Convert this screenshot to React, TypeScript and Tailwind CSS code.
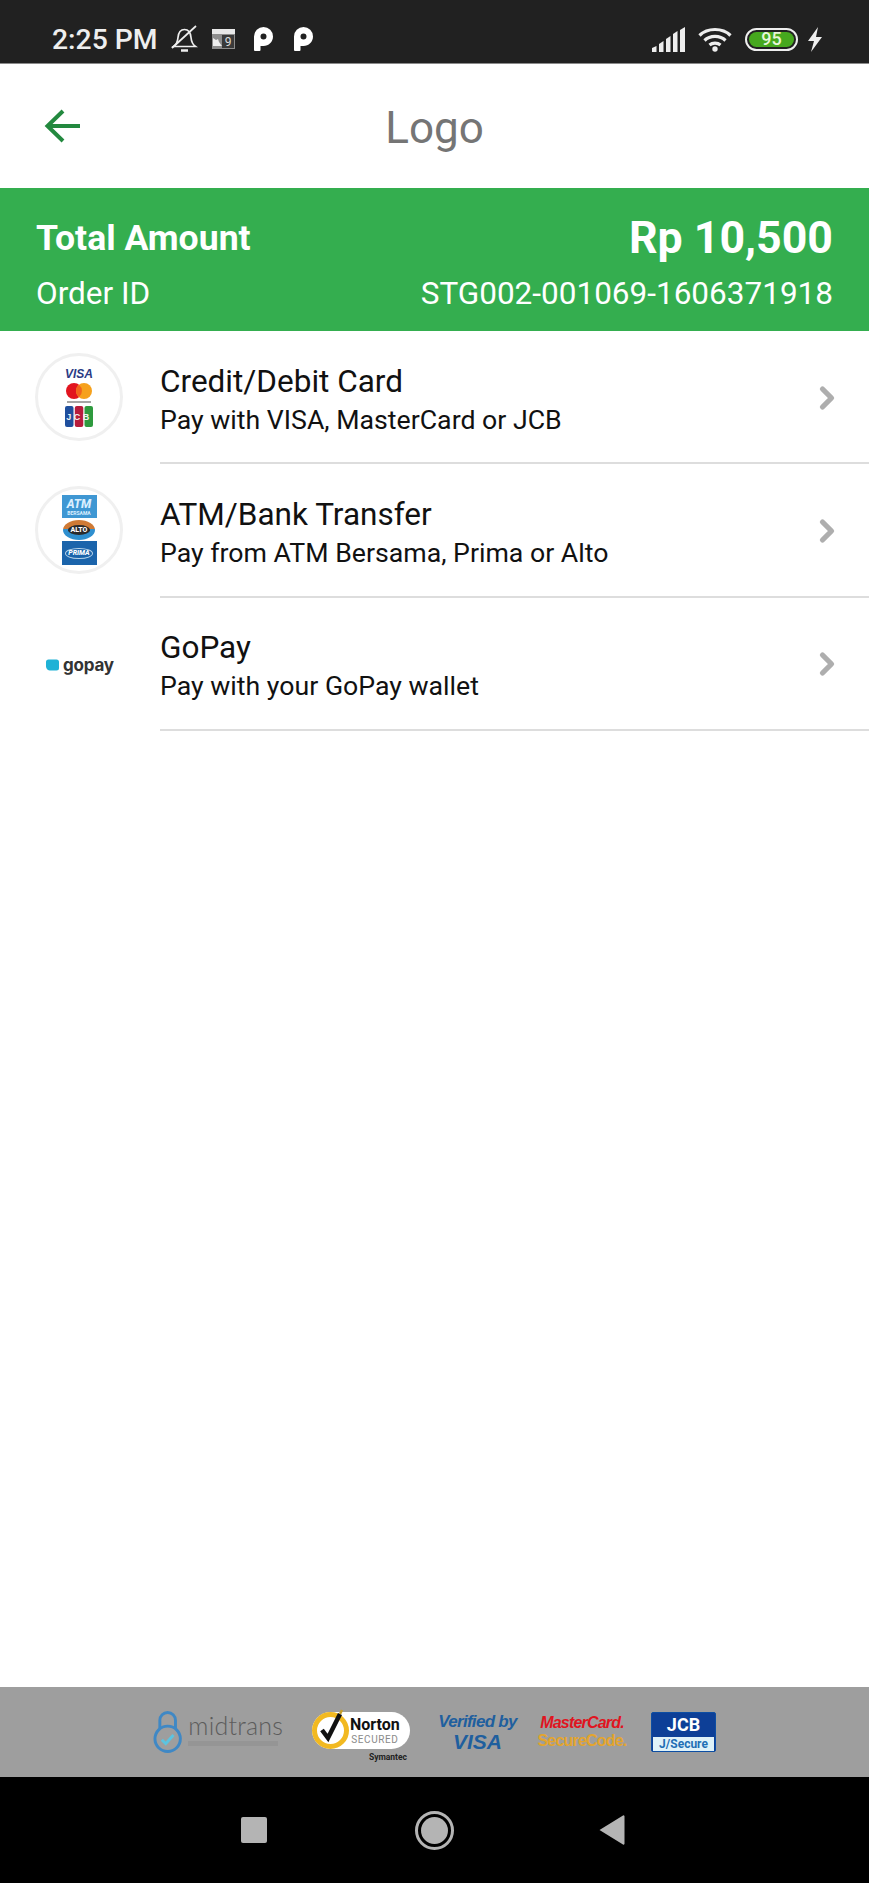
import { ChevronRight } from 'lucide-react';

const methods = [
  { title: 'Credit/Debit Card', sub: 'Pay with VISA, MasterCard or JCB', logo: 'card' },
  { title: 'ATM/Bank Transfer', sub: 'Pay from ATM Bersama, Prima or Alto', logo: 'atm' },
  { title: 'GoPay', sub: 'Pay with your GoPay wallet', logo: 'gopay' },
];

function CardLogo() {
  return (
    <div className="flex h-[88px] w-[88px] flex-col items-center justify-center rounded-full border-[3px] border-[#f0f0f0] bg-white">
      <span className="font-['Liberation_Sans',sans-serif] text-[12px] leading-[13px] font-bold italic text-[#2a3b84]">VISA</span>
      <svg width="28" height="21" viewBox="0 0 28 21" className="mt-[2px]">
        <circle cx="9" cy="8" r="8" fill="#e2141f" />
        <circle cx="19" cy="8" r="8" fill="#f6a11c" />
        <path d="M14 1.800a8 8 0 0 1 0 12.400a8 8 0 0 1 0-12.400z" fill="#f2641d" />
        <rect x="2" y="18" width="24" height="2" fill="#a5a5a5" />
      </svg>
      <svg width="28" height="21" viewBox="0 0 28 21" className="mt-[2px]">
        <rect x="0" y="0" width="8.500" height="21" rx="2" fill="#1f4f9e" />
        <rect x="9.800" y="0" width="8.500" height="21" rx="2" fill="#b71c3c" />
        <rect x="19.500" y="0" width="8.500" height="21" rx="2" fill="#2e9a3e" />
        <text x="14" y="14" textAnchor="middle" fontSize="9" fontWeight="700" fill="#f2f2f2" letterSpacing="2.500" fontFamily="Liberation Sans">JCB</text>
      </svg>
    </div>
  );
}

function AtmLogo() {
  return (
    <div className="flex h-[88px] w-[88px] flex-col items-center justify-center rounded-full border-[3px] border-[#f0f0f0] bg-white">
      <div className="flex h-[23px] w-[35px] flex-col items-center justify-center bg-[#3f97d3] text-[#dcefff]">
        <span className="text-[12px] leading-[12px] font-extrabold italic">ATM</span>
        <span className="text-[5px] leading-[6px] font-bold">BERSAMA</span>
      </div>
      <div className="mt-[2px] flex h-[20px] w-[32px] items-center justify-center rounded-[50%] bg-[linear-gradient(#cf7a35_45%,#2f8fcf_45%)]">
        <span className="rounded-[50%] bg-[#2b2b2b] px-[3px] text-[7px] leading-[10px] font-extrabold text-white">ALTO</span>
      </div>
      <div className="mt-[1px] flex h-[24px] w-[35px] items-center justify-center bg-[#1b64ab]">
        <span className="rounded-[50%] border border-[#b8d4ea] px-[2px] text-[7px] leading-[9px] font-extrabold italic text-white">PRIMA</span>
      </div>
    </div>
  );
}

function GopayLogo() {
  return (
    <div className="flex items-center gap-[4px] pt-[3px] pl-[11px]">
      <svg width="13" height="12" viewBox="0 0 13 12">
        <path d="M2.500 0.500h8a2.500 2.500 0 0 1 2.500 2.500v6a2.500 2.500 0 0 1-2.500 2.500h-6a4 4 0 0 1-4.500-4V3a2.500 2.500 0 0 1 2.500-2.500z" fill="#1fb2d6" />
      </svg>
      <span className="font-['Inter',sans-serif] text-[17px] leading-none font-bold tracking-[-0.2px] text-[#333333]">gopay</span>
    </div>
  );
}

function PIcon() {
  return (
    <svg width="19" height="24" viewBox="0 0 19 24">
      <path fillRule="evenodd" d="M0 9.500a9.500 9.500 0 0 1 19 0c0 5.500-4.500 9.500-9.500 9.500H6.500v4a1 1 0 0 1-1 1H1a1 1 0 0 1-1-1zM9.500 6.500a3 3 0 1 0 0 6a3 3 0 0 0 0-6z" fill="#fff" />
    </svg>
  );
}

function StatusBar() {
  return (
    <div className="flex h-[64px] items-center justify-between border-b border-[#8a8a8a] bg-[#212121] pt-[15px] pl-[52px] pr-[46px]">
      <div className="flex items-center">
        <span className="mt-[3px] text-[28.300px] leading-none font-medium text-[#eeeeee]">2:25 PM</span>
        <svg width="27" height="27" viewBox="0 0 27 27" fill="none" stroke="#eee" strokeWidth="1.700" className="ml-[13px]">
          <path d="M2.500 21.500c3-2 4-4 4.500-9C7.500 7 10 4.500 13.500 4.500s6 2.500 6.500 8c.5 5 1.500 7 4.500 9z" />
          <path d="M10 25.500h7" strokeWidth="2.500" />
          <path d="M1 23L25 1" />
        </svg>
        <svg width="23" height="21" viewBox="0 0 23 21" className="ml-[14px]">
          <rect x="0" y="1" width="23" height="20" fill="#8d8d8d" />
          <rect x="0" y="1" width="23" height="5" fill="#e8e8e8" />
          <rect x="10" y="7" width="12" height="13" fill="#3a3a3a" />
          <path d="M1 10l3 2 2-1 1 3 3 4H1z" fill="#eee" />
          <text x="16" y="18" textAnchor="middle" fontSize="12" fill="#ddd" fontFamily="Roboto">9</text>
        </svg>
        <div className="mt-[1px] ml-[19px] flex gap-[21px]">
          <PIcon />
          <PIcon />
        </div>
      </div>
      <div className="flex items-center">
        <svg width="33" height="25" viewBox="0 0 33 25" fill="#eee">
          <path d="M0 21l4.500-2v6H0z" />
          <path d="M7 17l4.500-3v11H7z" />
          <path d="M14 12l4.500-3v16H14z" />
          <path d="M21 7l4.500-3v21H21z" />
          <path d="M28 3l5-3v25h-5z" />
        </svg>
        <svg width="34" height="25" viewBox="0 0 34 25" fill="none" stroke="#eee" strokeWidth="3.200" className="ml-[13px]">
          <path d="M1.500 8.500C9.500 0.500 24.500 0.500 32.500 8.500" />
          <path d="M6.500 13.500C12 8 22 8 27.500 13.500" />
          <path d="M11.500 18C14.500 15.500 19.500 15.500 22.500 18" />
          <circle cx="17" cy="22" r="2.700" fill="#eee" stroke="none" />
        </svg>
        <div className="ml-[13px] flex h-[23px] w-[53px] items-center justify-center rounded-full border-[2.500px] border-[#eeeeee] p-[2px]">
          <div className="flex h-full w-full items-center justify-center rounded-full bg-[#46a81e] text-[18px] leading-none font-medium text-[#e8f5d8]">95</div>
        </div>
        <svg width="16" height="25" viewBox="0 0 16 25" fill="#eee" className="ml-[9px]">
          <path d="M11 0L1 14h6l-3 11L15 10H9z" />
        </svg>
      </div>
    </div>
  );
}

function FooterLogos() {
  return (
    <div className="flex h-[90px] items-center bg-[#9e9e9e] pl-[153px]">
      <div className="flex w-[130px] items-start">
        <svg width="30" height="45" viewBox="0 0 30 45" fill="none" stroke="#3f88c5" strokeWidth="3">
          <path d="M7 19V10a8 8 0 0 1 16 0v9" />
          <circle cx="15" cy="29" r="13" />
          <path d="M9 30l4 4 8-9" stroke="#5cc4e0" />
        </svg>
        <div className="mt-[2px] ml-[6px] flex flex-col">
          <span className="font-['Lato',sans-serif] text-[25px] leading-[26px] font-light tracking-[0.2px] text-[#5c5c5c]">midtrans</span>
          <span className="mt-[3px] h-[5px] w-[90px] bg-[#959595]" />
        </div>
      </div>
      <div className="ml-[29px] flex h-[62px] w-[98px] flex-col pt-[11px]">
        <div className="flex h-[37px] shrink-0 items-center rounded-full bg-white">
          <div className="flex h-[37px] w-[37px] shrink-0 items-center justify-center rounded-full border-[5px] border-[#f2b921] bg-white">
            <svg width="24" height="34" viewBox="0 0 24 34" fill="none" className="-mt-[10px]">
              <path d="M3 21l6 8L21 5" stroke="#111" strokeWidth="4.500" />
              <path d="M21 5l2-4" stroke="#c9a02a" strokeWidth="2.500" />
            </svg>
          </div>
          <div className="ml-[1px] flex flex-col items-center">
            <span className="text-[16px] leading-[18px] font-bold text-[#111]">Norton</span>
            <span className="text-[10px] leading-[12px] tracking-[0.6px] text-[#8a8a8a]">SECURED</span>
          </div>
        </div>
        <span className="mt-[3px] pr-[3px] text-right text-[8.500px] leading-[10px] font-bold text-[#222]">Symantec</span>
      </div>
      <div className="ml-[28px] flex w-[79px] flex-col items-center font-['Liberation_Sans',sans-serif] text-[#1f5f9e]">
        <span className="text-[17px] leading-[20px] font-bold tracking-[-0.7px] whitespace-nowrap italic">Verified by</span>
        <span className="text-[21px] leading-[20px] font-bold italic">VISA</span>
      </div>
      <div className="ml-[22px] flex w-[86px] flex-col items-center font-['Liberation_Sans',sans-serif]">
        <span className="text-[16px] leading-[18px] font-bold tracking-[-0.8px] whitespace-nowrap text-[#e0141f] italic">MasterCard.</span>
        <span className="text-[16px] leading-[18px] font-bold tracking-[-0.8px] whitespace-nowrap text-[#e3a52e]">SecureCode.</span>
      </div>
      <div className="ml-[26px] flex h-[40px] w-[65px] flex-col overflow-hidden rounded-[2px] border border-[#0d4ea3] bg-[#0d3f97]">
        <span className="h-[24px] text-center text-[18px] leading-[24px] font-bold text-white">JCB</span>
        <span className="mx-[1px] mb-[1px] h-[14px] bg-[#dff2f9] text-center text-[12px] leading-[14px] font-bold text-[#1f6fb5]">J/Secure</span>
      </div>
    </div>
  );
}

function NavBar() {
  return (
    <div className="flex h-[106px] items-center bg-black pl-[241px]">
      <div className="h-[26px] w-[26px] rounded-[2px] bg-[#b4b4b4]" />
      <div className="ml-[148px] flex h-[39px] w-[39px] items-center justify-center rounded-full border-[3px] border-[#b4b4b4]">
        <div className="h-[27px] w-[27px] rounded-full bg-[#b4b4b4]" />
      </div>
      <svg width="26" height="30" viewBox="0 0 26 30" className="ml-[145px]">
        <path d="M0.500 15L24 0.500a1 1 0 0 1 1.500 1v27a1 1 0 0 1-1.500 1z" fill="#b4b4b4" />
      </svg>
    </div>
  );
}

export default function App() {
  return (
    <div className="flex h-[1883px] w-[869px] flex-col overflow-hidden bg-white font-['Roboto',sans-serif]">
      <StatusBar />

      <div className="relative flex h-[124px] items-center justify-center pt-[3px]">
        <svg width="38" height="36" viewBox="0 0 38 36" fill="none" stroke="#23893f" strokeWidth="4" className="absolute top-[44px] left-[44px]">
          <path d="M3 18h33" />
          <path d="M19 3L3.500 18L19 33" />
        </svg>
        <span className="text-[44px] leading-none text-[#757575]">Logo</span>
      </div>

      <div className="flex h-[143px] flex-col justify-center gap-[18px] bg-[#34ae4f] px-[36px] pt-[10px] text-white">
        <div className="flex items-center justify-between">
          <span className="text-[35.600px] leading-[40px] font-bold">Total Amount</span>
          <span className="text-[44.700px] leading-[40px] font-bold">Rp 10,500</span>
        </div>
        <div className="flex items-center justify-between text-[31.500px] leading-[36px]">
          <span>Order ID</span>
          <span>STG002-001069-1606371918</span>
        </div>
      </div>

      <div className="flex-1">
        {methods.map((m) => (
          <div key={m.title} className="flex h-[133.330px]">
            <div className="flex w-[160px] shrink-0 items-center pl-[35px] pb-[1px]">
              {m.logo === 'card' && <CardLogo />}
              {m.logo === 'atm' && <AtmLogo />}
              {m.logo === 'gopay' && <GopayLogo />}
            </div>
            <div className="flex flex-1 items-center justify-between border-b-2 border-[#dddddd] pr-[24px]">
              <div className="flex flex-col pt-[7px]">
                <span className="text-[31.500px] leading-[38px] text-[#111111]">{m.title}</span>
                <span className="mt-[1px] text-[26.700px] leading-[36px] text-[#111111]">{m.sub}</span>
              </div>
              <ChevronRight size={36} strokeWidth={3.500} className="mt-[2px] text-[#aeaeae]" />
            </div>
          </div>
        ))}
      </div>

      <FooterLogos />
      <NavBar />
    </div>
  );
}
